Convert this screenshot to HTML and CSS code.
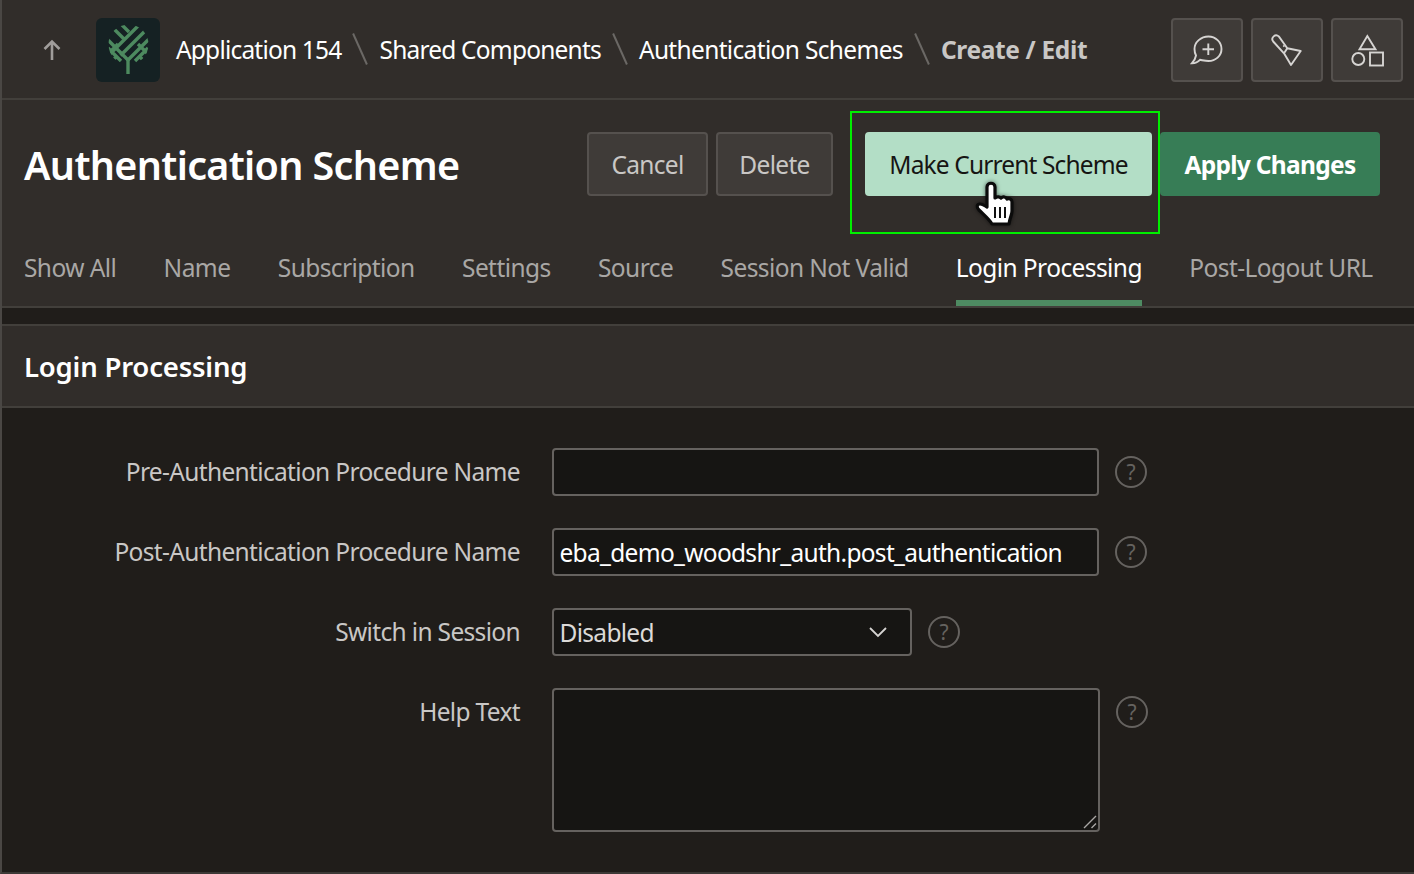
FILE: index.html
```html
<!DOCTYPE html>
<html lang="en">
<head>
<meta charset="utf-8">
<title>Authentication Scheme</title>
<link rel="stylesheet" href="styles.css">
</head>
<body>
<div class="page">
  <header class="topbar">
    <svg class="up" viewBox="0 0 20 24" width="20" height="24"><path d="M10 22V3.500M2.500 11L10 3.500 17.500 11" fill="none" stroke="#a09d9b" stroke-width="2.600"/></svg>
    <div class="logo">
      <svg viewBox="0 0 64 64" width="64" height="64" fill="none" stroke="#4d8a5f" stroke-width="3.400">
        <clipPath id="crown"><circle cx="32.500" cy="26.500" r="20"/></clipPath>
        <path d="M32 56V40"/>
        <g clip-path="url(#crown)">
          <path d="M32 42L8 18M32 42L56 18M14 36L44 6M24.500 37.500L52 10M14 7L28 21M22 3L33 14M12 30L25 43M22 26L12 36M52 30L39 43M42 26L52 36M21 38L16 43M43 38L48 43"/>
        </g>
      </svg>
    </div>
    <nav class="crumbs">
      <a class="crumb">Application 154</a><span class="sep"></span>
      <a class="crumb">Shared Components</a><span class="sep"></span>
      <a class="crumb long">Authentication Schemes</a><span class="sep"></span>
      <a class="crumb current">Create / Edit</a>
    </nav>
    <div class="tools">
      <button class="tool"><svg viewBox="0 0 34 30" width="34" height="30" fill="none" stroke="#d6d4d2" stroke-width="1.900"><path d="M18.500 1.500C25.500 1.500 31.500 7 31.500 14S25.500 26 18.500 26C15.500 26 12.500 25.200 10 24.800 8 27 5 28.200 2 28.200 4 26 5.500 23.500 6 20.500 5 18.500 4.500 16.500 4.500 14 4.500 7 11 1.500 18.500 1.500Z"/><path d="M18.300 8.500v11.500M12.500 14.300h11.500"/></svg></button>
      <button class="tool"><svg viewBox="0 0 34 34" width="34" height="34" fill="none" stroke="#d6d4d2" stroke-width="1.900" stroke-linejoin="round"><path d="M14 20.300L3.200 8.500A3.800 3.800 0 0 1 8.800 3.400L17.300 15.300 30.700 18 21 32Z"/><path d="M17.300 15.300L14 20.300"/><circle cx="13.800" cy="13" r=".6" fill="#d6d4d2" stroke-width="1"/></svg></button>
      <button class="tool"><svg viewBox="0 0 34 34" width="34" height="34" fill="none" stroke="#d6d4d2" stroke-width="1.900"><path d="M17.300 3L25.500 16.300H9.500z"/><circle cx="8.300" cy="26" r="6"/><rect x="20" y="19.500" width="13" height="13"/></svg></button>
    </div>
  </header>

  <section class="titlebar">
    <div class="titlerow">
      <h1>Authentication Scheme</h1>
      <div class="actions">
        <button class="btn cancel">Cancel</button>
        <button class="btn delete">Delete</button>
        <button class="btn mint">Make Current Scheme</button>
        <button class="btn green">Apply Changes</button>
      </div>
    </div>
    <div class="tabs">
      <a class="tab">Show All</a>
      <a class="tab">Name</a>
      <a class="tab">Subscription</a>
      <a class="tab">Settings</a>
      <a class="tab">Source</a>
      <a class="tab">Session Not Valid</a>
      <a class="tab active">Login Processing</a>
      <a class="tab">Post-Logout URL</a>
    </div>
  </section>

  <section class="region">
    <h2 class="regionhead">Login Processing</h2>
    <form class="form">
      <div class="row">
        <label>Pre-Authentication Procedure Name</label>
        <input class="field wide" type="text" value="">
        <span class="help">?</span>
      </div>
      <div class="row">
        <label>Post-Authentication Procedure Name</label>
        <input class="field wide" type="text" value="eba_demo_woodshr_auth.post_authentication">
        <span class="help">?</span>
      </div>
      <div class="row">
        <label>Switch in Session</label>
        <div class="field select">Disabled
          <svg viewBox="0 0 20 12" width="20" height="12" fill="none" stroke="#d6d4d2" stroke-width="1.800"><path d="M2 2l8 8 8-8"/></svg>
        </div>
        <span class="help">?</span>
      </div>
      <div class="row top">
        <label>Help Text</label>
        <div class="field area">
          <svg class="grip" viewBox="0 0 14 14" width="14" height="14" fill="none" stroke="#a9a7a5" stroke-width="1.400"><path d="M1 13L13 1M8.500 13L13 8.500"/></svg>
        </div>
        <span class="help">?</span>
      </div>
    </form>
  </section>

  <div class="highlight"></div>
  <svg class="pointer" viewBox="0 0 44 50" width="44" height="50">
    <path d="M14 6c0-5 8-5 8 0V17c2-2 5-1 6 0 2-2 5-1 6 1 2-1 5 0 5 3V30c0 4-2 6-3 13H19c-3-5-8-9-13-14-3-3-2-6 1-6 3 0 5 2 7 3Z" fill="#fff" stroke="#0b0b0b" stroke-width="3.200" stroke-linejoin="round"/>
    <path d="M22 26v11M27 26v11M32 26v11" stroke="#111" stroke-width="2"/>
  </svg>
</div>
</body>
</html>
```
FILE: styles.css
```css
* { box-sizing: border-box; }
html, body { margin: 0; padding: 0; height: 100%; overflow: hidden; }
body {
  background: #201d1a;
  font-family: "Noto Sans", "Open Sans", Arial, sans-serif;
  color: #fff;
}
.page {
  position: relative;
  width: 1414px;
  height: 874px;
  border-left: 2px solid #4a4744;
  border-bottom: 2px solid #3c3936;
  overflow: hidden;
}
.topbar {
  height: 100px;
  background: #312d2a;
  border-bottom: 2px solid #423f3b;
  display: flex;
  align-items: center;
  padding: 2px 11px 0 40px;
}
.up { margin-right: 34px; flex: none; }
.logo {
  width: 64px; height: 64px;
  background: #152123;
  border-radius: 6px;
  flex: none;
  margin-right: 16px;
}
.logo svg { display: block; }
.crumbs { display: flex; align-items: center; font-size: 24.500px; letter-spacing: -0.8px; padding-bottom: 2px; }
.crumb { color: #fff; white-space: nowrap; }
.crumb.long { letter-spacing: -0.66px; }
.crumb.current { font-weight: 700; color: #c9c7c5; letter-spacing: -0.35px; }
.sep {
  width: 2px; height: 34px;
  margin: 0 18px 0 18px;
  background: #6b6865;
  transform: rotate(-24deg);
}
.tools { margin-left: auto; display: flex; gap: 8px; }
.tool {
  width: 72px; height: 64px;
  background: #3f3b38;
  border: 2px solid #55514e;
  border-radius: 4px;
  display: flex; align-items: center; justify-content: center;
  padding: 0;
}
.titlebar {
  height: 208px;
  background: #312d2a;
  border-bottom: 2px solid #423f3b;
  display: flex;
  flex-direction: column;
}
.titlerow {
  display: flex;
  align-items: flex-start;
  justify-content: space-between;
  padding: 32px 32px 0 22px;
}
h1 { margin: 0; padding-top: 1px; font-size: 39.500px; line-height: 64px; font-weight: 600; letter-spacing: -0.67px; }
.actions { display: flex; margin-right: 2px; }
.btn {
  height: 64px;
  font: inherit;
  font-size: 24.500px;
  letter-spacing: -0.7px;
  border-radius: 4px;
  background: #3f3b38;
  border: 2px solid #55514e;
  color: #c9c7c5;
  padding: 0;
  margin-left: 8px;
}
.btn.cancel { width: 121px; margin-left: 0; }
.btn.delete { width: 117px; }
.btn.mint {
  width: 287px;
  margin-left: 32px;
  background: #b3dec6;
  border-color: #b3dec6;
  color: #161513;
  letter-spacing: -0.86px;
}
.btn.green {
  width: 220px;
  margin-left: 8px;
  background: #377d56;
  border-color: #377d56;
  color: #fff;
  font-weight: 700;
}
.tabs {
  margin-top: 39px;
  display: flex;
  gap: 47.400px;
  padding-left: 22px;
  flex: 1;
}
.tab {
  color: #a9a7a5;
  font-size: 24.500px;
  letter-spacing: -0.58px;
  line-height: 64px;
  height: 64px;
  white-space: nowrap;
}
.tab.active {
  color: #fff;
  border-bottom: 6px solid #4e8b62;
  height: 70px;
}
.region { margin-top: 16px; }
.regionhead {
  margin: 0;
  height: 84px;
  background: #312d2a;
  border-top: 2px solid #423f3b;
  border-bottom: 2px solid #423f3b;
  padding-left: 22px;
  font-size: 27.500px;
  font-weight: 600;
  line-height: 81px;
  letter-spacing: -0.2px;
}
.form { padding-top: 40px; display: flex; flex-direction: column; gap: 32px; }
.row { display: flex; align-items: center; }
.row.top { align-items: flex-start; }
.row label {
  width: 518px;
  text-align: right;
  color: #c9c7c5;
  font-size: 24.500px;
  letter-spacing: -0.66px;
  margin-right: 32px;
  padding-bottom: 2px;
  white-space: nowrap;
}
.row.top label { line-height: 48px; padding-bottom: 0; }
.field {
  height: 48px;
  background: #161513;
  border: 2px solid #65625f;
  border-radius: 4px;
  color: #fff;
  font-family: inherit;
  font-size: 24.500px;
  letter-spacing: -0.7px;
  padding: 0 5.500px;
}
.wide { width: 547px; outline: 0; }
.select {
  width: 360px;
  display: flex;
  align-items: center;
  justify-content: space-between;
  padding-right: 22px;
  color: #dcdad8;
}
.area {
  width: 548px;
  height: 144px;
  position: relative;
}
.grip { position: absolute; right: 1px; bottom: 1px; }
.help {
  width: 32px; height: 32px;
  margin-left: 16px;
  border: 2px solid #65625f;
  border-radius: 50%;
  color: #65625f;
  font-size: 21px;
  line-height: 28px;
  text-align: center;
  flex: none;
}
.row.top .help { margin-top: 8px; }
.highlight {
  position: absolute;
  left: 848px; top: 111px;
  width: 310px; height: 123px;
  border: 2px solid #00ee00;
  pointer-events: none;
}
.pointer {
  position: absolute;
  left: 971px; top: 181px;
  filter: drop-shadow(0 0 2px rgba(0, 0, 0, .55));
}
```
